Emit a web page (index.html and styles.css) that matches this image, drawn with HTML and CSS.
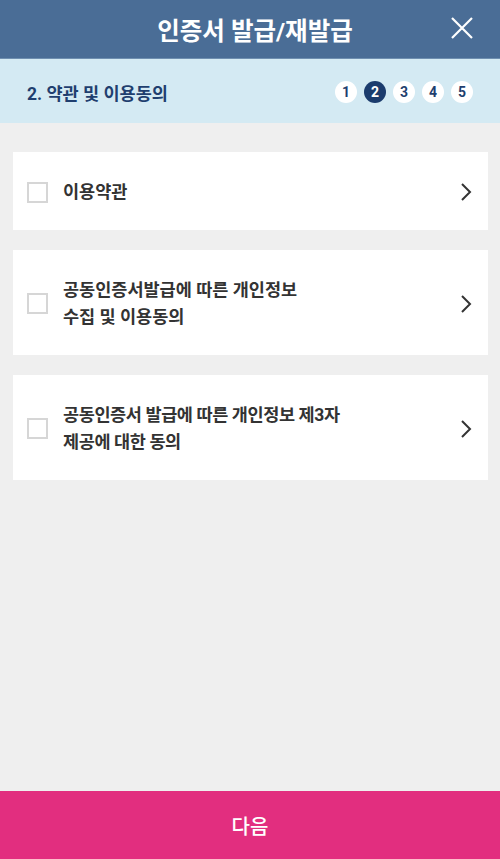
FILE: index.html
```html
<!DOCTYPE html>
<html lang="ko">
<head>
<meta charset="utf-8">
<link rel="stylesheet" href="styles.css">
</head>
<body>
<div class="app">
  <header class="header">
    <h1 class="title">인증서 발급/재발급</h1>
    <button class="close" aria-label="닫기">
      <svg width="24" height="24" viewBox="0 0 24 24"><path d="M2 2 L22 22 M22 2 L2 22" stroke="#fff" stroke-width="2.2" fill="none"/></svg>
    </button>
  </header>
  <div class="steps">
    <div class="step-title">2. 약관 및 이용동의</div>
    <ol class="step-list">
      <li class="dot">1</li>
      <li class="dot active">2</li>
      <li class="dot">3</li>
      <li class="dot">4</li>
      <li class="dot">5</li>
    </ol>
  </div>
  <main class="content">
    <div class="card card-short">
      <span class="check"></span>
      <span class="label">이용약관</span>
      <svg class="chev" width="12" height="20" viewBox="0 0 12 20"><path d="M2 2 L10 10 L2 18" stroke="#333" stroke-width="2" fill="none"/></svg>
    </div>
    <div class="card card-tall">
      <span class="check"></span>
      <span class="label">공동인증서발급에 따른 개인정보<br>수집 및 이용동의</span>
      <svg class="chev" width="12" height="20" viewBox="0 0 12 20"><path d="M2 2 L10 10 L2 18" stroke="#333" stroke-width="2" fill="none"/></svg>
    </div>
    <div class="card card-tall">
      <span class="check"></span>
      <span class="label label-tight">공동인증서 발급에 따른 개인정보 제3자<br>제공에 대한 동의</span>
      <svg class="chev" width="12" height="20" viewBox="0 0 12 20"><path d="M2 2 L10 10 L2 18" stroke="#333" stroke-width="2" fill="none"/></svg>
    </div>
  </main>
  <button class="next">다음</button>
</div>
</body>
</html>
```
FILE: styles.css
```css
* { box-sizing: border-box; }
html, body { margin: 0; padding: 0; }
body {
  font-family: "Roboto", "Noto Sans CJK KR", sans-serif;
  background: #efefef;
}
.app {
  width: 500px;
  height: 859px;
  display: flex;
  flex-direction: column;
}
.header {
  height: 59px;
  background: #4a6d96;
  display: flex;
  align-items: center;
  justify-content: center;
  position: relative;
  padding-left: 10px;
  border-bottom: 1px solid #6f8fb0;
}
.title {
  margin: 0;
  color: #fff;
  font-size: 24.5px;
  font-weight: 700;
}
.close {
  position: absolute;
  right: 26px;
  top: 16px;
  width: 24px;
  height: 24px;
  padding: 0;
  border: 0;
  background: none;
  display: flex;
}
.steps {
  height: 64px;
  background: #d4eaf3;
  display: flex;
  align-items: center;
  justify-content: space-between;
  padding: 2px 27px 0 27px;
}
.step-title {
  color: #1f3f6f;
  font-size: 17.5px;
  font-weight: 700;
}
.step-list {
  list-style: none;
  margin: 0;
  padding: 0;
  display: flex;
  gap: 7px;
}
.dot {
  width: 22px;
  height: 22px;
  border-radius: 50%;
  background: #fff;
  color: #1f3f6f;
  font-size: 14px;
  font-weight: 700;
  display: flex;
  align-items: center;
  justify-content: center;
}
.dot.active {
  background: #1b3c6d;
  color: #fff;
}
.content {
  flex: 1;
  padding: 29px 12px 0 13px;
  display: flex;
  flex-direction: column;
  gap: 20px;
}
.card {
  background: #fff;
  display: flex;
  align-items: center;
  padding: 2px 16px 0 14px;
}
.card-short { height: 78px; }
.card-tall { height: 105px; }
.check {
  width: 21px;
  height: 21px;
  border: 2px solid #d6d6d6;
  flex: none;
}
.label {
  flex: 1;
  margin-left: 15px;
  color: #333;
  font-size: 17.5px;
  font-weight: 700;
  line-height: 27px;
}
.label-tight { letter-spacing: -0.4px; }
.chev { flex: none; }
.next {
  height: 68px;
  border: 0;
  background: #e22e7f;
  color: #fff;
  font-family: "Noto Sans CJK KR", sans-serif;
  font-size: 20px;
  font-weight: 500;
  flex: none;
}
```
